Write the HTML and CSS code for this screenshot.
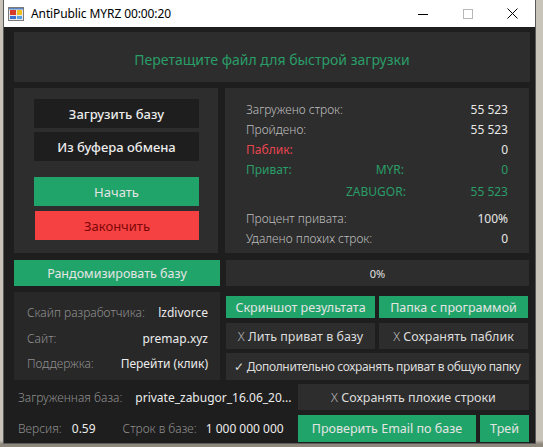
FILE: index.html
```html
<!DOCTYPE html>
<html lang="ru">
<head>
<meta charset="utf-8">
<title>AntiPublic MYRZ</title>
<link rel="stylesheet" href="styles.css">
</head>
<body>
<div class="window">
  <div class="titlebar">
    <svg class="app-icon" width="16" height="16" viewBox="0 0 16 16">
      <rect x="0.5" y="1.5" width="15" height="13" fill="#e8e8e8" stroke="#7a7a7a"/>
      <rect x="2" y="4" width="6" height="5" fill="#d83a2a"/>
      <rect x="9" y="4" width="5" height="5" fill="#f0c020"/>
      <rect x="2" y="10" width="6" height="3" fill="#3a6fd0"/>
      <rect x="9" y="10" width="5" height="3" fill="#5aa0e0"/>
      <rect x="1" y="2" width="14" height="1.5" fill="#5a86c8"/>
    </svg>
    <span class="title">AntiPublic MYRZ 00:00:20</span>
    <div class="caption-btns">
      <span class="cap cap-min"><svg width="10" height="10" viewBox="0 0 10 10"><path d="M0 5.5H10" stroke="#000" stroke-width="1"/></svg></span>
      <span class="cap cap-max"><svg width="10" height="10" viewBox="0 0 10 10"><rect x="0.5" y="0.5" width="9" height="9" fill="none" stroke="#b8b8b8" stroke-width="1"/></svg></span>
      <span class="cap cap-close"><svg width="11" height="11" viewBox="0 0 11 11"><path d="M0.5 0.5L10.5 10.5M10.5 0.5L0.5 10.5" stroke="#000" stroke-width="1"/></svg></span>
    </div>
  </div>
  <div class="client">
    <div class="dropzone">Перетащите файл для быстрой загрузки</div>

    <div class="grid top-row">
      <div class="panel actions">
        <div class="btn btn-dark">Загрузить базу</div>
        <div class="btn btn-dark">Из буфера обмена</div>
        <div class="btn btn-green btn-start">Начать</div>
        <div class="btn btn-red">Закончить</div>
      </div>
      <div class="panel stats">
        <div class="srow"><span class="lbl">Загружено строк:</span><span></span><span class="val">55 523</span></div>
        <div class="srow"><span class="lbl">Пройдено:</span><span></span><span class="val">55 523</span></div>
        <div class="srow"><span class="lbl red">Паблик:</span><span></span><span class="val">0</span></div>
        <div class="srow"><span class="lbl green">Приват:</span><span class="mid green">MYR:</span><span class="val green">0</span></div>
        <div class="srow r-zab"><span></span><span class="mid green">ZABUGOR:</span><span class="val green">55 523</span></div>
        <div class="srow r-pct"><span class="lbl">Процент привата:</span><span></span><span class="val">100%</span></div>
        <div class="srow"><span class="lbl">Удалено плохих строк:</span><span></span><span class="val">0</span></div>
      </div>
    </div>

    <div class="grid mid-row">
      <div class="left-col">
        <div class="btn btn-green btn-rand">Рандомизировать базу</div>
        <div class="panel info">
          <div class="irow"><span class="ilbl">Скайп разработчика:</span><span class="ival">lzdivorce</span></div>
          <div class="irow"><span class="ilbl">Сайт:</span><span class="ival">premap.xyz</span></div>
          <div class="irow"><span class="ilbl">Поддержка:</span><span class="ival">Перейти (клик)</span></div>
        </div>
      </div>
      <div class="right-col">
        <div class="progress">0%</div>
        <div class="pair pair-green">
          <div class="btn btn-green">Скриншот результата</div>
          <div class="btn btn-green">Папка с программой</div>
        </div>
        <div class="pair pair-dark">
          <div class="btn btn-panel"><span class="x">X</span>&nbsp;Лить приват в базу</div>
          <div class="btn btn-panel"><span class="x">X</span>&nbsp;Сохранять паблик</div>
        </div>
        <div class="btn btn-panel btn-wide">✓ Дополнительно сохранять приват в общую папку</div>
      </div>
    </div>

    <div class="bottom">
      <div class="brow">
        <span class="blbl">Загруженная база:</span>
        <span class="bval base-name">private_zabugor_16.06_20...</span>
      </div>
      <div class="btn btn-panel btn-bad"><span class="x">X</span>&nbsp;Сохранять плохие строки</div>
      <div class="brow">
        <span class="blbl">Версия:</span>
        <span class="bval ver">0.59</span>
        <span class="blbl rows-lbl">Строк в базе:</span>
        <span class="bval">1 000 000 000</span>
      </div>
      <div class="bbtns">
        <div class="btn btn-green btn-email">Проверить Email по базе</div>
        <div class="btn btn-green btn-tray">Трей</div>
      </div>
    </div>
  </div>
</div>
</body>
</html>
```

FILE: styles.css
```css
* { box-sizing: border-box; }
html, body { margin: 0; padding: 0; }
body {
  width: 543px;
  height: 447px;
  overflow: hidden;
  background: linear-gradient(#c9c4ba 0, #c9c4ba 440px, #8d877c 444px);
  font-family: "Noto Sans", "Open Sans", sans-serif;
}
.window {
  margin-left: 3px;
  width: 533px;
  height: 444px;
  border: 1px solid #5a5a5a;
  border-top: none;
  background: #1e1e1e;
  display: flex;
  flex-direction: column;
}
.titlebar {
  height: 27px;
  background: #ffffff;
  display: flex;
  align-items: center;
  flex-shrink: 0;
}
.app-icon { margin-left: 4px; margin-right: 7px; }
.title {
  font-size: 12px;
  color: #000;
  letter-spacing: -0.1px;
}
.caption-btns { margin-left: auto; display: flex; height: 100%; }
.cap {
  width: 45px;
  height: 100%;
  display: flex;
  align-items: center;
  justify-content: center;
}
.client {
  flex: 1;
  padding: 5px 5px 0 10px;
  display: flex;
  flex-direction: column;
}
.dropzone {
  height: 50px;
  background: #2d2d2d;
  color: #2a9d68;
  font-size: 14px;
  display: flex;
  align-items: center;
  justify-content: center;
  padding-top: 4px;
}
.grid {
  display: grid;
  grid-template-columns: 206px 303px;
  column-gap: 6px;
}
.top-row { margin-top: 6px; height: 165px; }
.panel { background: #2d2d2d; }
.actions {
  width: 204px;
  padding: 11px 19px 0 20px;
  display: flex;
  flex-direction: column;
}
.btn {
  display: flex;
  align-items: center;
  justify-content: center;
  font-size: 12.5px;
  color: #e6e6e6;
  white-space: nowrap;
}
.btn-dark {
  height: 29px;
  background: #1e1e1e;
  font-size: 13px;
  font-weight: 500;
  color: #ececec;
  margin-bottom: 4px;
}
.btn-green { background: #21a46a; color: #e4e4e4; }
.btn-start { height: 29px; margin-top: 12px; font-size: 13px; }
.btn-red {
  height: 29px;
  margin-top: 5px;
  margin-left: 1px;
  background: #f54141;
  color: #7d0707;
  font-size: 13px;
}
.stats {
  margin-left: -1px;
  padding: 11px 20px 0 21px;
}
.srow {
  height: 20px;
  display: grid;
  grid-template-columns: 100px 58px 104px;
  align-items: center;
  font-size: 12px;
}
.srow .lbl { color: #bdbdbd; white-space: nowrap; font-weight: 300; }
.srow .mid { text-align: right; }
.srow .val { text-align: right; color: #e8e8e8; }
.r-zab { margin-top: 2px; }
.r-pct { margin-top: 7px; }
.srow .red { color: #e8444f; font-weight: 400; }
.srow .green { color: #2a9d68; font-weight: 400; }

.mid-row { margin-top: 7px; height: 120px; }
.left-col { display: flex; flex-direction: column; }
.btn-rand { height: 26px; }
.info {
  margin-top: 6px;
  height: 88px;
  padding: 8px 12px 0 13px;
  background: #282828;
}
.irow {
  height: 25.5px;
  display: flex;
  justify-content: space-between;
  align-items: center;
  font-size: 12px;
}
.ilbl { color: #8f8f8f; font-weight: 300; }
.ival { color: #ececec; }
.right-col { display: flex; flex-direction: column; }
.progress {
  height: 26px;
  background: #2d2d2d;
  color: #e0e0e0;
  font-size: 11px;
  display: flex;
  align-items: center;
  justify-content: center;
}
.pair {
  display: grid;
  grid-template-columns: 149px 149px;
  column-gap: 4px;
}
.pair-green { margin-top: 10px; height: 22px; }
.pair-dark { margin-top: 5px; height: 26px; }
.btn-panel { background: #2d2d2d; color: #dcdcdc; }
.x { color: #bdbdbd; font-weight: 300; }
.btn-wide {
  margin-top: 4px;
  height: 27px;
  font-size: 12px;
  letter-spacing: -0.35px;
}

.bottom {
  margin-top: 4px;
  display: grid;
  grid-template-columns: 284px 231px;
  grid-template-rows: 26px 27px;
  row-gap: 5px;
  margin-right: -1px;
}
.brow {
  display: flex;
  align-items: center;
  font-size: 12px;
  padding-left: 4px;
  white-space: nowrap;
}
.blbl { color: #8f8f8f; font-weight: 300; }
.bval { color: #ececec; }
.base-name { margin-left: 13px; }
.ver { margin-left: 10px; }
.rows-lbl { margin-left: 27px; margin-right: 9px; }
.btn-bad { font-size: 12.5px; }
.bbtns {
  display: grid;
  grid-template-columns: 178px 49px;
  column-gap: 4px;
}
```
